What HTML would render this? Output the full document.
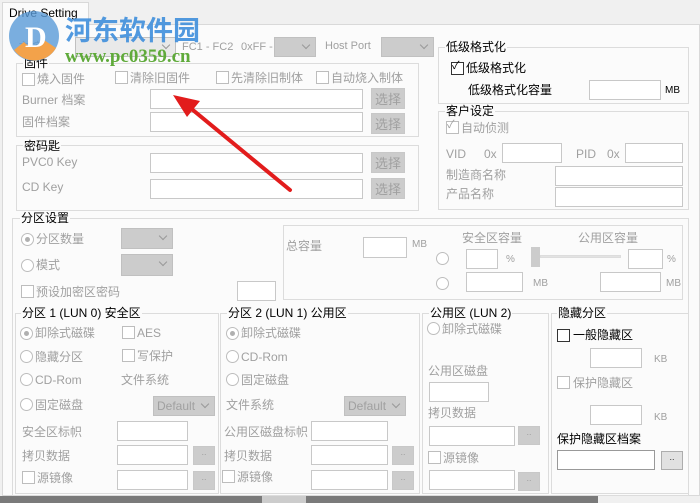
<!DOCTYPE html>
<html><head><meta charset="utf-8">
<style>
*{box-sizing:border-box}
body{margin:0;width:700px;height:503px;overflow:hidden;background:#f0f0f0;font-family:"Liberation Sans","Noto Sans CJK SC",sans-serif;font-size:12px;color:#000;position:relative}
.a{position:absolute;white-space:nowrap;line-height:14px}
.d{color:#a0a0a0}
.s{font-size:11px}
.g{position:absolute;border:1px solid #dcdcdc}
.gt{position:absolute;background:#fbfbfb;padding:0 1px;line-height:14px;white-space:nowrap}
.in{position:absolute;border:1px solid #c8c8c8;background:#fff}
.bt{position:absolute;border:1px solid #c8c8c8;background:#cccccc;color:#a0a0a0;text-align:center;font-size:13px}
.cb{position:absolute;border:1px solid #bdbdbd;background:#fff;width:13px;height:13px}
.rd{position:absolute;border:1px solid #bdbdbd;background:#fff;width:13px;height:13px;border-radius:50%}
.rd.on::after{content:"";position:absolute;left:3px;top:3px;width:5px;height:5px;border-radius:50%;background:#b0b0b0}
.cmb{position:absolute;background:#cccccc;border:1px solid #c0c0c0}
.cmb::after{content:"";position:absolute;right:6px;top:4px;width:5px;height:5px;border-right:1px solid #999;border-bottom:1px solid #999;transform:rotate(45deg)}
</style></head><body>
<div style="position:absolute;left:2px;top:24px;width:698px;height:472px;background:#fbfbfb;border:1px solid #d9d9d9"></div>
<div style="position:absolute;left:2px;top:2px;width:87px;height:23px;background:#fbfbfb;border:1px solid #d9d9d9;border-bottom:none"></div>
<div class="a" style="left:9px;top:6px;font-size:12px">Drive Setting</div>

<div class="a d" style="left:18px;top:40px">主控</div>
<div class="cmb" style="left:75px;top:37px;width:101px;height:20px;background:#e9e9e9"></div>
<div class="a d s" style="left:182px;top:40px">FC1 - FC2</div>
<div class="a d s" style="left:241px;top:40px">0xFF -</div>
<div class="cmb" style="left:274px;top:37px;width:42px;height:20px"></div>
<div class="a d s" style="left:325px;top:39px">Host Port</div>
<div class="cmb" style="left:381px;top:37px;width:53px;height:20px"></div>

<!-- 固件 -->
<div class="g" style="left:16px;top:63px;width:403px;height:74px"></div>
<div class="gt" style="left:23px;top:56px">固件</div>
<div class="cb" style="left:22px;top:73px"></div><div class="a d" style="left:37px;top:72px">燒入固件</div>
<div class="cb" style="left:115px;top:71px"></div><div class="a d" style="left:130px;top:71px">清除旧固件</div>
<div class="cb" style="left:216px;top:71px"></div><div class="a d" style="left:231px;top:71px">先清除旧制体</div>
<div class="cb" style="left:316px;top:71px"></div><div class="a d" style="left:331px;top:71px">自动烧入制体</div>
<div class="a d" style="left:22px;top:93px">Burner 档案</div>
<div class="in" style="left:150px;top:89px;width:213px;height:20px"></div>
<div class="bt" style="left:371px;top:88px;width:34px;height:21px">选择</div>
<div class="a d" style="left:22px;top:115px">固件档案</div>
<div class="in" style="left:150px;top:112px;width:213px;height:20px"></div>
<div class="bt" style="left:371px;top:113px;width:34px;height:21px">选择</div>

<!-- 密码匙 -->
<div class="g" style="left:16px;top:145px;width:403px;height:66px"></div>
<div class="gt" style="left:23px;top:139px">密码匙</div>
<div class="a d" style="left:22px;top:155px">PVC0 Key</div>
<div class="in" style="left:150px;top:153px;width:213px;height:20px"></div>
<div class="bt" style="left:371px;top:152px;width:34px;height:21px">选择</div>
<div class="a d" style="left:22px;top:180px">CD Key</div>
<div class="in" style="left:150px;top:179px;width:213px;height:20px"></div>
<div class="bt" style="left:371px;top:178px;width:34px;height:21px">选择</div>

<!-- 低级格式化 -->
<div class="g" style="left:438px;top:47px;width:251px;height:57px"></div>
<div class="gt" style="left:445px;top:40px">低级格式化</div>
<div class="cb" style="left:451px;top:62px;border-color:#333"></div><div class="a" style="left:452px;top:59px;font-size:11px">✓</div>
<div class="a" style="left:466px;top:61px">低级格式化</div>
<div class="a" style="left:468px;top:83px">低级格式化容量</div>
<div class="in" style="left:589px;top:80px;width:72px;height:20px"></div>
<div class="a" style="left:665px;top:84px;font-size:10px">MB</div>

<!-- 客户设定 -->
<div class="g" style="left:438px;top:111px;width:251px;height:99px"></div>
<div class="gt" style="left:445px;top:104px">客户设定</div>
<div class="cb" style="left:446px;top:121px"></div><div class="a d" style="left:447px;top:118px;font-size:11px">✓</div>
<div class="a d" style="left:461px;top:121px">自动侦测</div>
<div class="a d" style="left:446px;top:147px">VID</div><div class="a d" style="left:484px;top:147px">0x</div>
<div class="in" style="left:502px;top:143px;width:60px;height:20px"></div>
<div class="a d" style="left:576px;top:147px">PID</div><div class="a d" style="left:607px;top:147px">0x</div>
<div class="in" style="left:625px;top:143px;width:58px;height:20px"></div>
<div class="a d" style="left:446px;top:168px">制造商名称</div>
<div class="in" style="left:555px;top:166px;width:128px;height:20px"></div>
<div class="a d" style="left:446px;top:187px">产品名称</div>
<div class="in" style="left:555px;top:187px;width:128px;height:20px"></div>

<!-- 分区设置 -->
<div class="g" style="left:12px;top:218px;width:677px;height:278px"></div>
<div class="gt" style="left:20px;top:211px">分区设置</div>
<div class="rd on" style="left:21px;top:233px"></div><div class="a d" style="left:36px;top:232px">分区数量</div>
<div class="cmb" style="left:121px;top:228px;width:52px;height:21px"></div>
<div class="rd" style="left:21px;top:259px"></div><div class="a d" style="left:36px;top:258px">模式</div>
<div class="cmb" style="left:121px;top:254px;width:52px;height:22px"></div>
<div class="cb" style="left:21px;top:285px"></div><div class="a d" style="left:36px;top:285px">预设加密区密码</div>
<div class="in" style="left:237px;top:281px;width:39px;height:20px"></div>
<div class="g" style="left:283px;top:225px;width:400px;height:75px"></div>
<div class="a d" style="left:286px;top:239px">总容量</div>
<div class="in" style="left:363px;top:237px;width:44px;height:21px"></div>
<div class="a d" style="left:412px;top:238px;font-size:10px">MB</div>
<div class="a d" style="left:462px;top:231px">安全区容量</div>
<div class="a d" style="left:578px;top:231px">公用区容量</div>
<div class="rd" style="left:436px;top:252px"></div>
<div class="rd" style="left:436px;top:277px"></div>
<div class="in" style="left:466px;top:249px;width:32px;height:20px"></div>
<div class="a d" style="left:506px;top:253px;font-size:10px">%</div>
<div style="position:absolute;left:531px;top:247px;width:9px;height:20px;background:#ccc"></div>
<div style="position:absolute;left:540px;top:255px;width:81px;height:3px;background:#e3e3e3;border:1px solid #ddd"></div>
<div class="in" style="left:628px;top:249px;width:35px;height:20px"></div>
<div class="a d" style="left:667px;top:253px;font-size:10px">%</div>
<div class="in" style="left:466px;top:272px;width:57px;height:20px"></div>
<div class="a d" style="left:533px;top:277px;font-size:10px">MB</div>
<div class="in" style="left:600px;top:272px;width:61px;height:20px"></div>
<div class="a d" style="left:666px;top:277px;font-size:10px">MB</div>

<!-- group1 -->
<div class="g" style="left:15px;top:313px;width:204px;height:181px"></div>
<div class="gt" style="left:21px;top:306px">分区 1 (LUN 0) 安全区</div>
<div class="rd on" style="left:20px;top:327px"></div><div class="a d" style="left:35px;top:326px">卸除式磁碟</div>
<div class="cb" style="left:122px;top:326px"></div><div class="a d" style="left:137px;top:326px">AES</div>
<div class="rd" style="left:20px;top:350px"></div><div class="a d" style="left:35px;top:350px">隐藏分区</div>
<div class="cb" style="left:122px;top:349px"></div><div class="a d" style="left:137px;top:349px">写保护</div>
<div class="rd" style="left:20px;top:373px"></div><div class="a d" style="left:35px;top:373px">CD-Rom</div>
<div class="a d" style="left:121px;top:373px">文件系统</div>
<div class="rd" style="left:20px;top:398px"></div><div class="a d" style="left:35px;top:398px">固定磁盘</div>
<div class="cmb" style="left:153px;top:396px;width:62px;height:20px"></div><div class="a d" style="left:157px;top:399px">Default</div>
<div class="a d" style="left:22px;top:425px">安全区标帜</div>
<div class="in" style="left:117px;top:421px;width:71px;height:20px"></div>
<div class="a d" style="left:22px;top:449px">拷贝数据</div>
<div class="in" style="left:117px;top:445px;width:71px;height:20px"></div>
<div class="bt" style="left:193px;top:446px;width:22px;height:19px;font-size:9px">..</div>
<div class="cb" style="left:22px;top:471px"></div><div class="a d" style="left:37px;top:471px">源镜像</div>
<div class="in" style="left:117px;top:470px;width:71px;height:20px"></div>
<div class="bt" style="left:193px;top:471px;width:22px;height:19px;font-size:9px">..</div>

<!-- group2 -->
<div class="g" style="left:220px;top:313px;width:200px;height:181px"></div>
<div class="gt" style="left:227px;top:306px">分区 2 (LUN 1) 公用区</div>
<div class="rd on" style="left:226px;top:327px"></div><div class="a d" style="left:241px;top:326px">卸除式磁碟</div>
<div class="rd" style="left:226px;top:350px"></div><div class="a d" style="left:241px;top:350px">CD-Rom</div>
<div class="rd" style="left:226px;top:373px"></div><div class="a d" style="left:241px;top:373px">固定磁盘</div>
<div class="a d" style="left:226px;top:398px">文件系统</div>
<div class="cmb" style="left:344px;top:396px;width:62px;height:20px"></div><div class="a d" style="left:348px;top:399px">Default</div>
<div class="a d" style="left:224px;top:425px">公用区磁盘标帜</div>
<div class="in" style="left:311px;top:421px;width:77px;height:20px"></div>
<div class="a d" style="left:224px;top:449px">拷贝数据</div>
<div class="in" style="left:311px;top:445px;width:77px;height:20px"></div>
<div class="bt" style="left:392px;top:446px;width:22px;height:19px;font-size:9px">..</div>
<div class="cb" style="left:222px;top:470px"></div><div class="a d" style="left:237px;top:470px">源镜像</div>
<div class="in" style="left:311px;top:470px;width:77px;height:20px"></div>
<div class="bt" style="left:392px;top:471px;width:22px;height:19px;font-size:9px">..</div>

<!-- group3 -->
<div class="g" style="left:422px;top:313px;width:127px;height:181px"></div>
<div class="gt" style="left:429px;top:306px">公用区 (LUN 2)</div>
<div class="rd" style="left:427px;top:322px"></div><div class="a d" style="left:442px;top:322px">卸除式磁碟</div>
<div class="a d" style="left:428px;top:364px">公用区磁盘</div>
<div class="in" style="left:429px;top:382px;width:60px;height:20px"></div>
<div class="a d" style="left:428px;top:406px">拷贝数据</div>
<div class="in" style="left:429px;top:426px;width:86px;height:20px"></div>
<div class="bt" style="left:518px;top:426px;width:22px;height:19px;font-size:9px">..</div>
<div class="cb" style="left:428px;top:451px"></div><div class="a d" style="left:443px;top:451px">源镜像</div>
<div class="in" style="left:429px;top:470px;width:86px;height:20px"></div>
<div class="bt" style="left:518px;top:472px;width:22px;height:19px;font-size:9px">..</div>

<!-- group4 -->
<div class="g" style="left:551px;top:313px;width:138px;height:181px"></div>
<div class="gt" style="left:557px;top:306px">隐藏分区</div>
<div class="cb" style="left:557px;top:329px;border-color:#333"></div><div class="a" style="left:573px;top:328px">一般隐藏区</div>
<div class="in" style="left:590px;top:348px;width:52px;height:20px"></div>
<div class="a d" style="left:654px;top:353px;font-size:10px">KB</div>
<div class="cb" style="left:557px;top:376px"></div><div class="a d" style="left:573px;top:376px">保护隐藏区</div>
<div class="in" style="left:590px;top:405px;width:52px;height:20px"></div>
<div class="a d" style="left:654px;top:411px;font-size:10px">KB</div>
<div class="a" style="left:557px;top:432px">保护隐藏区档案</div>
<div class="in" style="left:557px;top:450px;width:98px;height:20px;border-color:#999"></div>
<div class="bt" style="left:661px;top:451px;width:22px;height:19px;font-size:9px;color:#333;background:#e1e1e1;border-color:#adadad">..</div>

<!-- bottom strip -->
<div style="position:absolute;left:0;top:496px;width:700px;height:7px;background:#7a7a7a"></div>
<div style="position:absolute;left:262px;top:496px;width:44px;height:7px;background:#ccc"></div>
<div style="position:absolute;left:598px;top:496px;width:102px;height:7px;background:#f0f0f0"></div>

<!-- watermark -->
<svg style="position:absolute;left:0;top:0" width="700" height="503">
<circle cx="34" cy="36" r="25" fill="#5a9bd8" opacity="0.8"/>
<path d="M14 50 A25 25 0 0 0 56 48 L44 40 A12 12 0 0 1 24 42 Z" fill="#f3a24a"/>
<text x="25" y="47" font-family="Liberation Serif" font-weight="bold" font-size="30" fill="#fff">D</text>
<text x="65" y="40" font-family="Noto Sans CJK SC" font-weight="bold" font-size="27" fill="#3f8fdc" opacity="0.9">河东软件园</text>
<text x="65" y="62" font-family="Liberation Serif" font-weight="bold" font-size="19" fill="#5faa3a">www.pc0359.cn</text>
<line x1="290" y1="190" x2="188" y2="106" stroke="#e21c1c" stroke-width="4" stroke-linecap="round"/>
<polygon points="173,95 200,101 187,117" fill="#e21c1c"/>
</svg>
</body></html>
